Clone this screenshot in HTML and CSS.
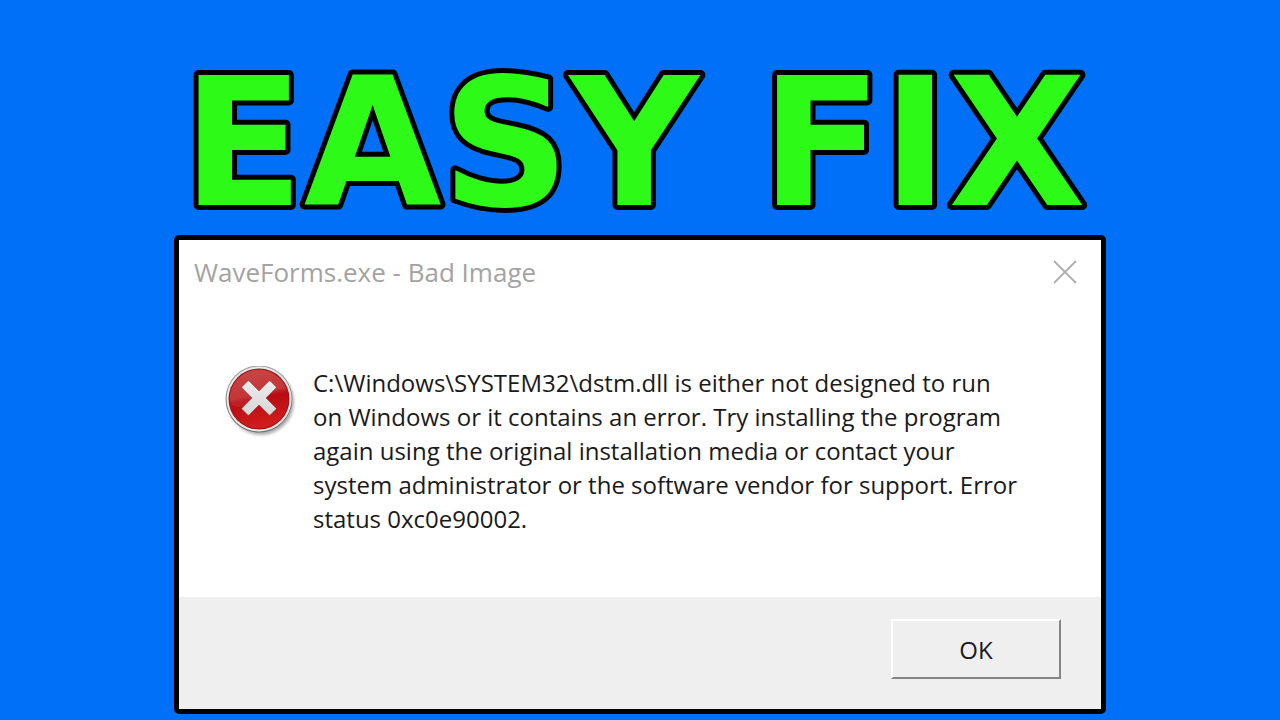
FILE: index.html
```html
<!DOCTYPE html>
<html lang="en">
<head>
    <meta charset="UTF-8">
    <meta name="viewport" content="width=device-width, initial-scale=1.0">
    <title>WaveForms.exe - Bad Image</title>
    <link rel="stylesheet" href="styles.css">
</head>
<body>
    <div class="container">
        <h1 class="headline">
            <svg class="headline-art" viewBox="0 0 932 180">
                <text class="headline-text" x="460" y="150" text-anchor="middle">EASY FIX</text>
            </svg>
        </h1>

        <!-- Error dialog -->
        <div class="dialog" role="alertdialog" aria-labelledby="dialog-title" aria-describedby="dialog-message">
            <div class="title-bar">
                <h2 class="dialog-title" id="dialog-title">WaveForms.exe - Bad Image</h2>
                <button type="button" class="close-button" aria-label="Close">
                    <svg width="24" height="24" viewBox="0 0 24 24">
                        <path d="M1 1 L23 23 M23 1 L1 23" stroke="#b0b0b0" stroke-width="1.9" fill="none"/>
                    </svg>
                </button>
            </div>

            <div class="dialog-body">
                <svg class="error-icon" width="72" height="74" viewBox="0 1 72 74" aria-hidden="true">
                    <defs>
                        <linearGradient id="ring" x1="0" y1="0" x2="0" y2="1">
                            <stop offset="0" stop-color="#a0a0a0"/>
                            <stop offset="1" stop-color="#707070"/>
                        </linearGradient>
                        <linearGradient id="red" x1="0" y1="0" x2="0.2" y2="1">
                            <stop offset="0" stop-color="#c23a38"/>
                            <stop offset="0.5" stop-color="#c02428"/>
                            <stop offset="0.56" stop-color="#b80c12"/>
                            <stop offset="1" stop-color="#d01c1c"/>
                        </linearGradient>
                        <linearGradient id="cross" x1="0" y1="0" x2="1" y2="1">
                            <stop offset="0" stop-color="#f4f4f4"/>
                            <stop offset="1" stop-color="#cfcfcf"/>
                        </linearGradient>
                        <filter id="soft" x="-20%" y="-20%" width="140%" height="140%">
                            <feGaussianBlur stdDeviation="1.5"/>
                        </filter>
                    </defs>
                    <circle cx="36" cy="37" r="33" fill="#777" opacity="0.6" filter="url(#soft)"/>
                    <circle cx="34" cy="34" r="33.5" fill="url(#ring)"/>
                    <circle cx="34" cy="34" r="32.5" fill="#ebebeb"/>
                    <circle cx="34" cy="34" r="30.5" fill="#9d1216"/>
                    <circle cx="34" cy="34" r="29.5" fill="url(#red)"/>
                    <path d="M5 34 A29 29 0 0 1 61 23 Q43 25 30 35 T6 40 Z" fill="#fff" opacity="0.08"/>
                    <g transform="translate(34 33) rotate(45)">
                        <path d="M-4 -20 H4 Q5 -20 5 -19 V-5 H19 Q20 -5 20 -4 V4 Q20 5 19 5 H5 V19 Q5 20 4 20 H-4 Q-5 20 -5 19 V5 H-19 Q-20 5 -20 4 V-4 Q-20 -5 -19 -5 H-5 V-19 Q-5 -20 -4 -20 Z" fill="url(#cross)" stroke="#922" stroke-width="0.5"/>
                    </g>
                </svg>
                <p class="message" id="dialog-message">
                    C:\Windows\SYSTEM32\dstm.dll is either not designed to run<br>
                    on Windows or it contains an error. Try installing the program<br>
                    again using the original installation media or contact your<br>
                    system administrator or the software vendor for support. Error<br>
                    status 0xc0e90002.
                </p>
            </div>

            <div class="dialog-footer">
                <button type="button" class="ok-button">OK</button>
            </div>
        </div>
    </div>
</body>
</html>
```
FILE: styles.css
```css
* {
    box-sizing: border-box;
}

body {
    margin: 0;
    background-color: #0070f8;
    font-family: 'Open Sans', 'Noto Sans', sans-serif;
    color: #1a1a1a;
}

.container {
    display: flex;
    flex-direction: column;
    align-items: center;
    padding: 55px 20px 6px;
}

.headline {
    width: 100%;
    max-width: 932px;
    margin: 0;
}

.headline-art {
    display: block;
    width: 100%;
    overflow: visible;
}

.headline-text {
    font-family: 'DejaVu Sans', sans-serif;
    font-size: 178px;
    font-weight: 700;
    fill: #2dfa17;
    stroke: #000;
    stroke-width: 10px;
    stroke-linejoin: round;
    paint-order: stroke fill;
}

/* Dialog window */
.dialog {
    width: 100%;
    max-width: 932px;
    border: 5px solid #000;
    border-radius: 5px;
    background-color: #fff;
}

.title-bar {
    display: flex;
    align-items: center;
    justify-content: space-between;
    padding: 15px 24px 0 15px;
}

.dialog-title {
    margin: 0;
    font-size: 26px;
    line-height: 34px;
    font-weight: 400;
    color: #a3a3a3;
}

.close-button {
    display: flex;
    padding: 0;
    border: none;
    background: none;
}

.dialog-body {
    display: flex;
    align-items: flex-start;
    gap: 16px;
    padding: 77px 46px 61px;
}

.error-icon {
    flex-shrink: 0;
}

.message {
    margin: 0;
    font-size: 24px;
    line-height: 34px;
}

.dialog-footer {
    display: flex;
    justify-content: flex-end;
    padding: 22px 40px 30px;
    background-color: #efefef;
}

.ok-button {
    width: 170px;
    height: 60px;
    border: 2px solid;
    border-color: #fff #858585 #858585 #fff;
    background-color: #efefef;
    font-family: inherit;
    font-size: 24px;
    color: #1a1a1a;
}
```
